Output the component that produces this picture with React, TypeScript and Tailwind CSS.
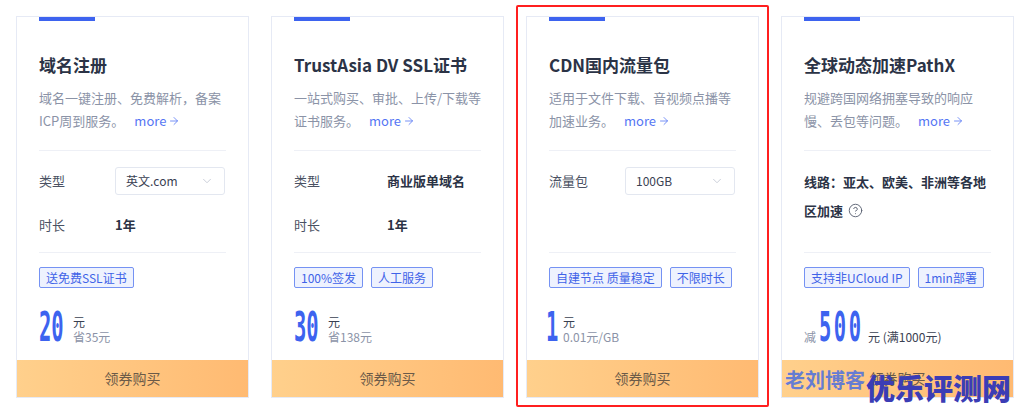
import { ArrowRight, ChevronDown, CircleHelp } from "lucide-react";
import type { ReactNode } from "react";

type Card = {
  title: string;
  desc: string[];
  rows: ReactNode;
  tags: string[];
  price: ReactNode;
  selected?: boolean;
};

const font = { fontFamily: '"Noto Sans CJK SC", "Noto Sans", sans-serif' };

const Digits = ({ value, width, spaced }: { value: string; width: string; spaced?: boolean }) => (
  <span className={`inline-block h-[41px] overflow-visible ${width}`}>
    <span
      className={`inline-block origin-left [transform:scaleX(0.5)] text-[41px] leading-[41px] font-bold text-[#3d63ef] ${
        spaced ? "tracking-[5px]" : ""
      }`}
      style={{ fontFamily: '"DejaVu Sans Mono", monospace' }}
    >
      {value}
    </span>
  </span>
);

const Select = ({ value }: { value: string }) => (
  <div className="flex h-[28px] w-[110px] items-center justify-between rounded-[3px] border border-[#e3e7f0] pl-[10px] pr-[10px] text-[12px] text-[#3a4152]">
    <span>{value}</span>
    <ChevronDown size={14} strokeWidth={1.5} className="text-[#c3c8d3]" />
  </div>
);

const Row = ({ label, offset, children }: { label: string; offset: string; children: ReactNode }) => (
  <div className="flex h-[28px] items-center text-[13px]">
    <span className={`shrink-0 text-[#4a5162] ${offset}`}>{label}</span>
    {children}
  </div>
);

const SidePrice = ({ top, bottom }: { top: string; bottom: string }) => (
  <div className="mb-[4px] flex flex-col text-[12px] leading-[15px]">
    <span className="text-[#3a4152]">{top}</span>
    <span className="text-[#8b93a7]">{bottom}</span>
  </div>
);

const cards: Card[] = [
  {
    title: "域名注册",
    desc: ["域名一键注册、免费解析，备案", "ICP周到服务。"],
    rows: (
      <>
        <Row label="类型" offset="w-[76px]">
          <Select value="英文.com" />
        </Row>
        <Row label="时长" offset="w-[76px]">
          <span className="font-bold text-[#2b3346]">1年</span>
        </Row>
      </>
    ),
    tags: ["送免费SSL证书"],
    price: (
      <div className="flex items-end gap-[9px]">
        <Digits value="20" width="w-[25px]" />
        <SidePrice top="元" bottom="省35元" />
      </div>
    ),
  },
  {
    title: "TrustAsia DV SSL证书",
    desc: ["一站式购买、审批、上传/下载等", "证书服务。"],
    rows: (
      <>
        <Row label="类型" offset="w-[93px]">
          <span className="font-bold text-[#2b3346]">商业版单域名</span>
        </Row>
        <Row label="时长" offset="w-[93px]">
          <span className="font-bold text-[#2b3346]">1年</span>
        </Row>
      </>
    ),
    tags: ["100%签发", "人工服务"],
    price: (
      <div className="flex items-end gap-[9px]">
        <Digits value="30" width="w-[25px]" />
        <SidePrice top="元" bottom="省138元" />
      </div>
    ),
  },
  {
    title: "CDN国内流量包",
    desc: ["适用于文件下载、音视频点播等", "加速业务。"],
    rows: (
      <Row label="流量包" offset="w-[76px]">
        <Select value="100GB" />
      </Row>
    ),
    tags: ["自建节点 质量稳定", "不限时长"],
    price: (
      <div className="flex items-end gap-[8px]">
        <Digits value="1" width="w-[6px] -ml-[3px] mr-[3px]" />
        <SidePrice top="元" bottom="0.01元/GB" />
      </div>
    ),
    selected: true,
  },
  {
    title: "全球动态加速PathX",
    desc: ["规避跨国网络拥塞导致的响应", "慢、丢包等问题。"],
    rows: (
      <div className="text-[13px] font-bold leading-[29px] text-[#2b3346]">
        <div className="whitespace-nowrap">线路：亚太、欧美、非洲等各地</div>
        <div className="flex items-center gap-[5px]">
          区加速
          <CircleHelp size={15} strokeWidth={1.5} className="text-[#5a6172]" />
        </div>
      </div>
    ),
    tags: ["支持非UCloud IP", "1min部署"],
    price: (
      <div className="flex items-end">
        <span className="mb-[4px] mr-[3px] text-[12px] leading-[15px] text-[#8b93a7]">减</span>
        <Digits value="500" width="w-[42px]" spaced />
        <span className="mb-[4px] ml-[7px] text-[12px] leading-[15px] text-[#3a4152]">元 (满1000元)</span>
      </div>
    ),
  },
];

const ProductCard = ({ card }: { card: Card }) => (
  <div className="relative w-[233px] shrink-0">
    {card.selected && (
      <div className="pointer-events-none absolute -bottom-[9px] -left-[10px] -right-[10px] -top-[11px] rounded-[2px] border-2 border-[#ff1f1f]" />
    )}
    <div className="flex h-[382px] flex-col border border-[#e6eaf5] bg-white">
      <div className="ml-[22px] h-[4px] w-[56px] bg-[#3d63ef]" />
      <div className="px-[22px]">
        <h2 className="mt-[32px] whitespace-nowrap text-[17px] font-bold leading-[24px] text-[#2b3346]">
          {card.title}
        </h2>
        <div className="mt-[9px] text-[13px] leading-[23px] text-[#8b93a7]">
          <div className="whitespace-nowrap">{card.desc[0]}</div>
          <div className="flex items-center whitespace-nowrap">
            {card.desc[1]}
            <span className="ml-[10px] flex items-center text-[#5576f4]">
              more
              <ArrowRight size={12} strokeWidth={1.6} className="ml-[2px]" />
            </span>
          </div>
        </div>
        <div className="mt-[18px] h-px bg-[#eef0f6]" />
        <div className="flex h-[101px] flex-col gap-[16px] pt-[16px]">{card.rows}</div>
        <div className="h-px bg-[#eef0f6]" />
        <div className="mt-[14px] flex gap-[8px]">
          {card.tags.map((t) => (
            <span
              key={t}
              className="h-[21px] whitespace-nowrap rounded-[2px] border border-[#7592f3] bg-[#eef2fe] px-[6px] text-[12px] leading-[19px] text-[#3f63e8]"
            >
              {t}
            </span>
          ))}
        </div>
        <div className="mt-[19px]">{card.price}</div>
      </div>
      <button className="mt-auto flex h-[37px] w-full items-center justify-center bg-gradient-to-r from-[#ffd08c] to-[#ffba72] text-[14px] text-[#6b5a48]">
        领券购买
      </button>
    </div>
  </div>
);

export default function App() {
  return (
    <div className="relative h-[415px] w-[1024px] overflow-hidden bg-white" style={font}>
      <div className="flex gap-[22px] pl-[16px] pt-[16px]">
        {cards.map((c) => (
          <ProductCard key={c.title} card={c} />
        ))}
      </div>
      <div className="pointer-events-none absolute left-[785px] top-[368px] text-[20px] font-bold leading-[24px] text-[#4a6ee0]/85">
        老刘博客
      </div>
      <div className="pointer-events-none absolute left-[866px] top-[369px] text-[29px] font-black leading-[36px] text-[#3b3db5]">
        优乐评测网
      </div>
    </div>
  );
}
